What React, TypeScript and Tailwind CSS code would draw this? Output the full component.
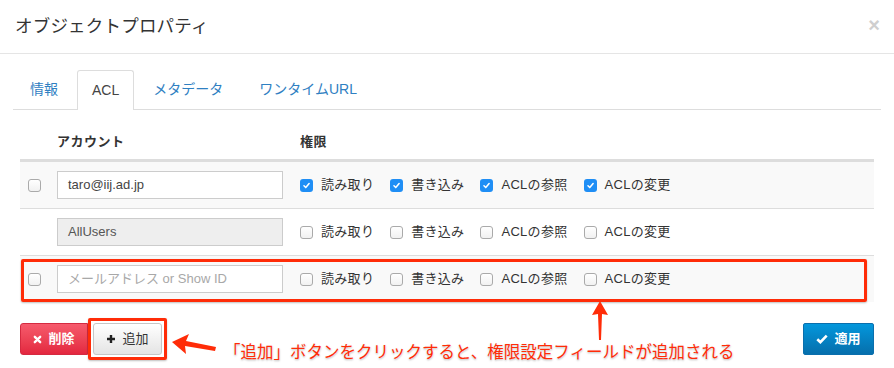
import React from 'react';

const FONT = "font-['Liberation_Sans','Noto_Sans_CJK_JP',sans-serif]";

const PERMS = ['読み取り', '書き込み', 'ACLの参照', 'ACLの変更'];

function CheckBox({ checked }: { checked?: boolean }) {
  if (checked) {
    return (
      <span className="flex h-[13px] w-[13px] shrink-0 items-center justify-center rounded-[3px] bg-[#1f8ef5]">
        <svg width="9" height="9" viewBox="0 0 10 10">
          <path d="M2.2 5.3 L4.2 7.3 L7.9 2.9" fill="none" stroke="#fff" strokeWidth="1.7" strokeLinecap="round" strokeLinejoin="round" />
        </svg>
      </span>
    );
  }
  return <span className="h-[13px] w-[13px] shrink-0 rounded-[3px] border border-[#aaaaaa] bg-gradient-to-b from-white to-[#f1f1f1]" />;
}

function Perms({ checked }: { checked?: boolean }) {
  return (
    <div className="ml-[17px] flex items-center">
      {PERMS.map(p => (
        <label key={p} className="mr-[16px] flex items-center gap-[8px] text-[13px] tracking-[0.3px] text-[#333]">
          <CheckBox checked={checked} />
          <span>{p}</span>
        </label>
      ))}
    </div>
  );
}

interface RowProps {
  bg: string;
  rowCheck?: boolean;
  value?: string;
  placeholder?: string;
  disabled?: boolean;
  checked?: boolean;
  highlight?: boolean;
}

function AclRow({ bg, rowCheck, value, placeholder, disabled, checked, highlight }: RowProps) {
  return (
    <div className={`relative flex h-[47px] items-center border-t border-[#dddddd] ${bg}`}>
      <div className="flex w-[37px] shrink-0 items-center pl-[8px]">{rowCheck && <CheckBox />}</div>
      <div
        className={`flex h-[28px] w-[226px] shrink-0 items-center border border-[#cccccc] px-[10px] text-[13px] ${
          disabled ? 'bg-[#eeeeee] text-[#555]' : 'bg-white text-[#444]'
        } ${placeholder ? 'text-[#a8a8a8]' : ''}`}
      >
        {value ?? placeholder}
      </div>
      <Perms checked={checked} />
      {highlight && (
        <div className="pointer-events-none absolute top-[3px] bottom-0 left-[1px] right-[7px] rounded-[2px] border-[3px] border-[#ff2c08] shadow-[0_1px_2px_rgba(0,0,0,0.25)]" />
      )}
    </div>
  );
}

export default function App() {
  return (
    <div className={`h-[368px] w-[894px] overflow-hidden bg-white text-[#333] ${FONT}`}>
      <div className="flex h-[54px] items-center justify-between border-b border-[#e5e5e5] pl-[15px] pr-[14px]">
        <h3 className="text-[17.5px] tracking-[0.2px] text-[#333]">オブジェクトプロパティ</h3>
        <span className="-mt-[3px] text-[20px] font-bold leading-none text-[#cfcfcf]">×</span>
      </div>

      <div className="px-[13px] pt-[16px]">
        <div className="flex h-[40px] items-stretch border-b border-[#dddddd] text-[14px]">
          <div className="mr-[2px] flex items-center px-[17px] text-[#2f80c2]">情報</div>
          <div className="-mb-px mr-[2px] flex items-center rounded-t-[3px] border border-b-0 border-[#dddddd] bg-white px-[14px] text-[#444]">ACL</div>
          <div className="mr-[2px] flex items-center px-[17px] text-[#2f80c2]">メタデータ</div>
          <div className="flex items-center px-[17px] text-[#2f80c2]">ワンタイムURL</div>
        </div>

        <div className="px-[7px]">
          <div className="mt-[15px] flex h-[36px] items-center border-b-2 border-[#dddddd] text-[13px] font-bold tracking-[0.5px] text-[#333]">
            <div className="w-[37px] shrink-0" />
            <div className="w-[226px] shrink-0">アカウント</div>
            <div className="ml-[17px]">権限</div>
          </div>

          <AclRow bg="bg-[#f9f9f9]" rowCheck value="taro@iij.ad.jp" checked />
          <AclRow bg="bg-white" value="AllUsers" disabled />
          <AclRow bg="bg-[#f9f9f9]" rowCheck placeholder="メールアドレス or Show ID" highlight />

          <div className="relative mt-[16px] flex items-start">
            <button className="mt-[5px] flex h-[32px] w-[68px] items-center justify-center gap-[6px] rounded-l-[3px] border border-[#d52a40] bg-gradient-to-b from-[#f65a6c] to-[#e3263f] text-[13px] font-bold text-white">
              <svg width="9" height="9" viewBox="0 0 10 10">
                <path d="M2 2 L8 8 M8 2 L2 8" stroke="#fff" strokeWidth="2.6" strokeLinecap="round" />
              </svg>
              削除
            </button>
            <div className="rounded-[2px] border-[3px] border-[#ff2c08] p-[2px] shadow-[0_1px_2px_rgba(0,0,0,0.25)]">
              <button className="flex h-[32px] w-[69px] items-center justify-center gap-[6px] rounded-[3px] border border-[#c6c6c6] bg-gradient-to-b from-white to-[#e4e4e4] text-[13px] text-[#333]">
                <svg width="10" height="10" viewBox="0 0 10 10">
                  <path d="M5 1 V9 M1 5 H9" stroke="#222" strokeWidth="2.4" />
                </svg>
                追加
              </button>
            </div>
            <svg className="ml-[4px] mt-[15px]" width="46" height="28" viewBox="0 0 46 28">
              <path d="M1 9 L18 1 L15 8 L45 14 L44 18 L14 13 L15 21 Z" fill="#ff2c08" />
            </svg>
            <div className="ml-[7px] mt-[24px] text-[16.5px] leading-[20px] text-[#ff2c08] [text-shadow:0_0_2px_#fff,0_1px_2px_rgba(0,0,0,0.35)]">
              「追加」ボタンをクリックすると、権限設定フィールドが追加される
            </div>
            <button className="ml-auto mt-[5px] flex h-[32px] w-[71px] items-center justify-center gap-[6px] rounded-[2px] border border-[#0a6fad] bg-gradient-to-b from-[#0397dc] to-[#066fac] text-[13px] font-bold text-white">
              <svg width="12" height="10" viewBox="0 0 12 10">
                <path d="M1.3 5.2 L4.4 8.2 L10.7 1.6" fill="none" stroke="#fff" strokeWidth="2.6" />
              </svg>
              適用
            </button>

            <svg className="pointer-events-none absolute left-[572px] -top-[17px]" width="16" height="40" viewBox="0 0 16 40">
              <path d="M8 0 L16 14 L10 13 L9 39 L7 39 L6 13 L0 14 Z" fill="#ff2c08" />
            </svg>
          </div>
        </div>
      </div>
    </div>
  );
}
